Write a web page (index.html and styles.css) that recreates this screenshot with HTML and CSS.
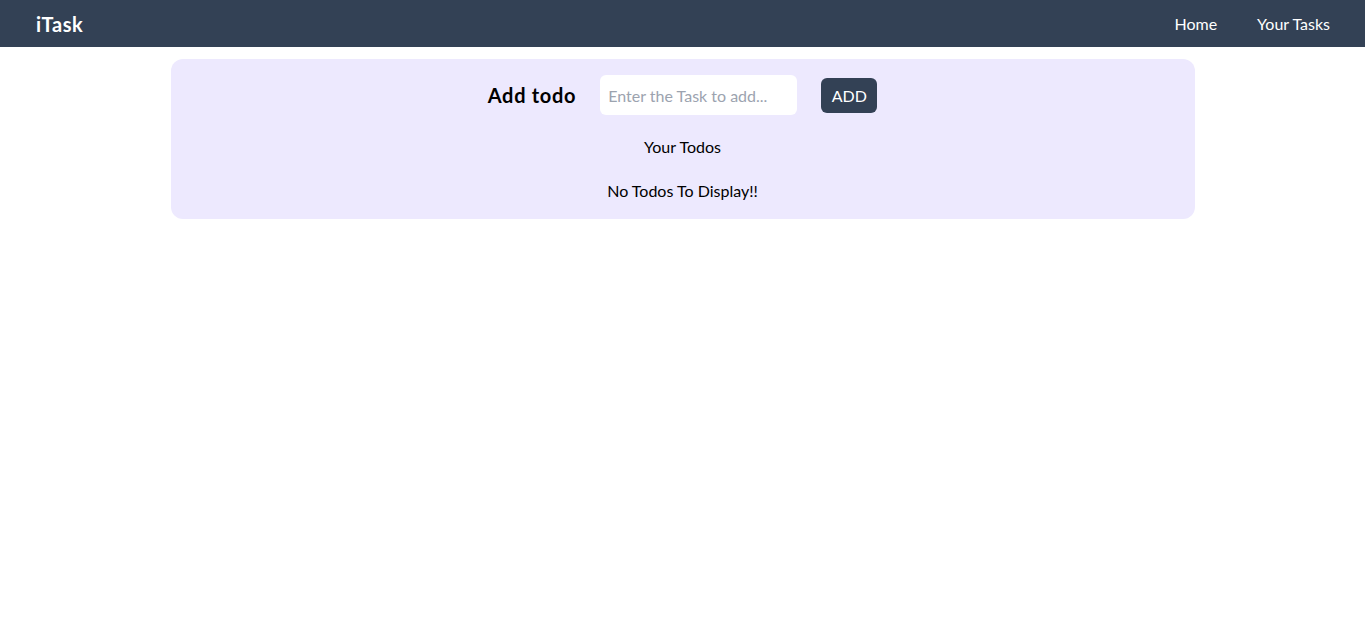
FILE: index.html
```html
<!DOCTYPE html>
<html>
<head>
<meta charset="utf-8">
<link rel="stylesheet" href="styles.css">
</head>
<body>
<nav class="nav">
  <div class="brand">iTask</div>
  <ul class="links">
    <li>Home</li>
    <li>Your Tasks</li>
  </ul>
</nav>
<main class="card">
  <div class="add-row">
    <h2 class="add-title">Add todo</h2>
    <input class="task-input" type="text" placeholder="Enter the Task to add...">
    <button class="add-btn">ADD</button>
  </div>
  <h3 class="todos-title">Your Todos</h3>
  <div class="empty">No Todos To Display!!</div>
</main>
</body>
</html>
```

FILE: styles.css
```css
* { box-sizing: border-box; }
body {
  margin: 0;
  font-family: "Lato", "Noto Sans", sans-serif;
  font-size: 16px;
  color: #000;
  background: #fff;
}
.nav {
  height: 47px;
  background: #334155;
  color: #fff;
  display: flex;
  align-items: center;
  justify-content: space-between;
  padding: 0 35px 0 36px;
}
.brand {
  font-weight: 700;
  font-size: 20px;
  letter-spacing: 0.6px;
}
.links {
  list-style: none;
  margin: 0;
  padding: 0;
  display: flex;
  gap: 40px;
}
.card {
  width: 1024px;
  margin: 12px auto 0;
  background: #ede9fe;
  border-radius: 12px;
  padding: 16px 20px 16px;
  min-height: 159px;
}
.add-row {
  display: flex;
  justify-content: center;
  align-items: center;
  gap: 24px;
  height: 40px;
}
.add-title {
  margin: 0;
  font-size: 20px;
  font-weight: 700;
  letter-spacing: 0.7px;
}
.task-input {
  width: 197px;
  height: 40px;
  border: none;
  border-radius: 6px;
  background: #fff;
  padding: 0 8px;
  font: inherit;
  font-size: 16px;
  outline: none;
}
.task-input::placeholder { color: #9ca3af; }
.add-btn {
  height: 35px;
  width: 56px;
  border: none;
  border-radius: 6px;
  background: #334155;
  color: #fff;
  font: inherit;
  font-size: 16px;
}
.todos-title {
  margin: 20px 0 0;
  font-size: 16px;
  font-weight: 400;
  line-height: 24px;
  text-align: center;
}
.empty {
  margin-top: 20px;
  line-height: 24px;
  text-align: center;
}
```
